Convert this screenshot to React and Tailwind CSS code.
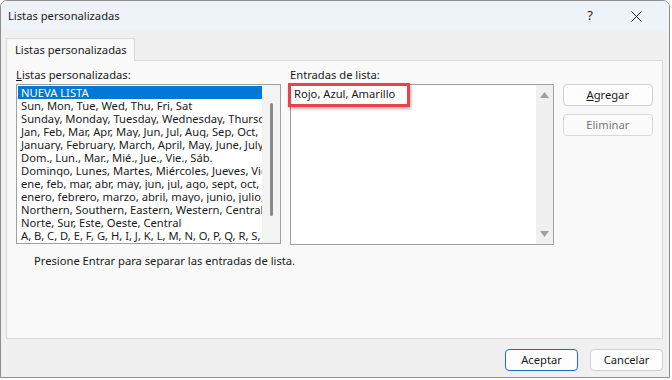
import React from 'react';

const lists = [
  'Sun, Mon, Tue, Wed, Thu, Fri, Sat',
  'Sunday, Monday, Tuesday, Wednesday, Thursday, Friday, Saturday',
  'Jan, Feb, Mar, Apr, May, Jun, Jul, Aug, Sep, Oct, Nov, Dec',
  'January, February, March, April, May, June, July, August, September, October, November, December',
  'Dom., Lun., Mar., Mié., Jue., Vie., Sáb.',
  'Domingo, Lunes, Martes, Miércoles, Jueves, Viernes, Sábado',
  'ene, feb, mar, abr, may, jun, jul, ago, sept, oct, nov, dic',
  'enero, febrero, marzo, abril, mayo, junio, julio, agosto, septiembre, octubre',
  'Northern, Southern, Eastern, Western, Central',
  'Norte, Sur, Este, Oeste, Central',
  'A, B, C, D, E, F, G, H, I, J, K, L, M, N, O, P, Q, R, S, T, U, V, W, X, Y, Z',
];

const font = { fontFamily: '"Noto Sans", "Liberation Sans", sans-serif' };

const App = () => {
  return (
    <div className="w-[672px] h-[380px] bg-white overflow-hidden text-[11.2px] text-[#1a1a1a]" style={font}>
      <div className="w-[670px] h-[378px] flex flex-col border border-[#8e8e8e] rounded-t-[7px] overflow-hidden bg-[#f0f0f0]">
        {/* title bar */}
        <div className="h-[30px] shrink-0 flex items-center bg-[#eef2f9] pl-[7px]">
          <span className="flex-1 leading-none">Listas personalizadas</span>
          <span className="w-[46px] text-center text-[13px]">?</span>
          <span className="w-[46px] flex justify-center">
            <svg width="11" height="11" viewBox="0 0 11 11">
              <path d="M0.5 0.5 L10.5 10.5 M10.5 0.5 L0.5 10.5" stroke="#222" strokeWidth="1" />
            </svg>
          </span>
          <span className="w-[10px]" />
        </div>

        {/* body */}
        <div className="flex-1 flex flex-col px-[5px] pt-[7px]">
          <div className="flex">
            <div className="h-[23px] w-[129px] border border-b-0 border-[#d9d9d9] bg-[#f9f9f9] flex items-center pl-[8px] -mb-px relative z-10 whitespace-nowrap">
              Listas personalizadas
            </div>
          </div>
          <div className="w-[657px] h-[279px] border border-[#d9d9d9] bg-[#f9f9f9] px-[9px] pt-[6px]">
            <div className="flex gap-[9px]">
              {/* left column */}
              <div className="w-[265px]">
                <div className="h-[16px] leading-[16px] mb-px">
                  <span className="underline">L</span>istas personalizadas:
                </div>
                <div className="h-[160px] border border-[#a0a0a0] bg-white flex">
                  <div className="flex-1 pt-px pl-px overflow-hidden">
                    {['NUEVA LISTA', ...lists].map((item, i) => (
                      <div
                        key={item}
                        className={
                          i === 0
                            ? 'h-[13px] leading-[13px] pl-[3px] whitespace-nowrap overflow-hidden bg-[#0078d7] text-white'
                            : 'h-[13px] leading-[13px] pl-[3px] whitespace-nowrap overflow-hidden'
                        }
                      >
                        {item}
                      </div>
                    ))}
                  </div>
                  <div className="w-[18px] bg-[#f3f3f3] flex justify-center pt-[18px]">
                    <div className="w-[3px] h-[113px] rounded-full bg-[#8a8a8a]" />
                  </div>
                </div>
                <div className="pl-[18px] mt-[9px] h-[16px] leading-[16px] whitespace-nowrap">
                  Presione Entrar para separar las entradas de lista.
                </div>
              </div>

              {/* right column */}
              <div className="w-[265px]">
                <div className="h-[16px] leading-[16px] mb-px">Entradas de lista:</div>
                <div className="h-[161px] border border-[#a0a0a0] bg-white flex relative">
                  <div className="flex-1 pl-[3px] pt-[2px] leading-[13px]">Rojo, Azul, Amarillo</div>
                  <div className="w-[17px] bg-[#f0f0f0] flex flex-col items-center justify-between py-[7px]">
                    <svg width="9" height="6" viewBox="0 0 9 6">
                      <path d="M4.5 0 L9 6 L0 6 Z" fill="#a0a0a0" />
                    </svg>
                    <svg width="9" height="6" viewBox="0 0 9 6">
                      <path d="M0 0 L9 0 L4.5 6 Z" fill="#a0a0a0" />
                    </svg>
                  </div>
                  <div className="absolute left-[-3px] top-[-2px] w-[122px] h-[24px] border-[3px] border-[#e9434a] shadow-[1px_2px_3px_rgba(0,0,0,0.3)]" />
                </div>
              </div>

              {/* buttons */}
              <div className="w-[91px] pt-[17px] flex flex-col gap-[8px]">
                <button className="h-[22px] rounded-[4px] border border-[#d0d0d0] bg-[#fdfdfd] text-[#1a1a1a]">
                  <span className="underline">A</span>gregar
                </button>
                <button className="h-[22px] rounded-[4px] border border-[#d9d9d9] bg-[#fbfbfb] text-[#767676]">
                  Eliminar
                </button>
              </div>
            </div>
          </div>

          {/* footer */}
          <div className="flex justify-end gap-[12px] pr-[1px] mt-[10px]">
            <button className="w-[73px] h-[22px] rounded-[4px] border border-[#1a6fc4] bg-[#fdfdfd]">Aceptar</button>
            <button className="w-[73px] h-[22px] rounded-[4px] border border-[#d0d0d0] bg-[#fdfdfd]">Cancelar</button>
          </div>
        </div>
      </div>
    </div>
  );
};

export default App;
